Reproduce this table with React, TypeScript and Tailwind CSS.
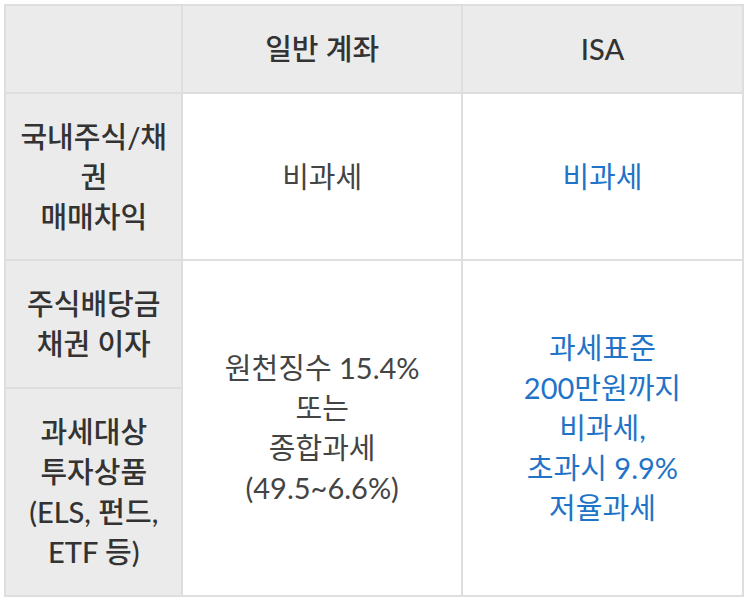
import React from "react";

export default function App() {
  const font = { fontFamily: 'Lato, "Noto Sans CJK KR", "Noto Sans", sans-serif' };
  const th = "border-2 border-[#dedede] bg-[#ebebeb] text-center align-middle font-medium text-[#333]";
  const td = "border-2 border-[#dedede] bg-white text-center align-middle font-normal text-[#444]";
  const blue = "border-2 border-[#dedede] bg-white text-center align-middle font-normal text-[#1f74c8]";
  return (
    <div className="w-[750px] h-[604px] bg-white pt-[4px] pl-[4px]" style={font}>
      <table className="border-collapse w-[740px] text-[29px] leading-[40px]">
        <colgroup>
          <col className="w-[178px]" />
          <col className="w-[280px]" />
          <col className="w-[282px]" />
        </colgroup>
        <tbody>
          <tr className="h-[88px]">
            <th className={th}></th>
            <th className={th}>일반 계좌</th>
            <th className={th}>ISA</th>
          </tr>
          <tr className="h-[167px]">
            <th className={th}>
              국내주식/채
              <br />권<br />
              매매차익
            </th>
            <td className={td}>비과세</td>
            <td className={blue}>비과세</td>
          </tr>
          <tr className="h-[128px]">
            <th className={th}>
              주식배당금
              <br />
              채권 이자
            </th>
            <td className={td} rowSpan={2}>
              원천징수 15.4%
              <br />
              또는
              <br />
              종합과세
              <br />
              (49.5~6.6%)
            </td>
            <td className={blue} rowSpan={2}>
              과세표준
              <br />
              200만원까지
              <br />
              비과세,
              <br />
              초과시 9.9%
              <br />
              저율과세
            </td>
          </tr>
          <tr className="h-[208px]">
            <th className={th}>
              과세대상
              <br />
              투자상품
              <br />
              (ELS, 펀드,
              <br />
              ETF 등)
            </th>
          </tr>
        </tbody>
      </table>
    </div>
  );
}
